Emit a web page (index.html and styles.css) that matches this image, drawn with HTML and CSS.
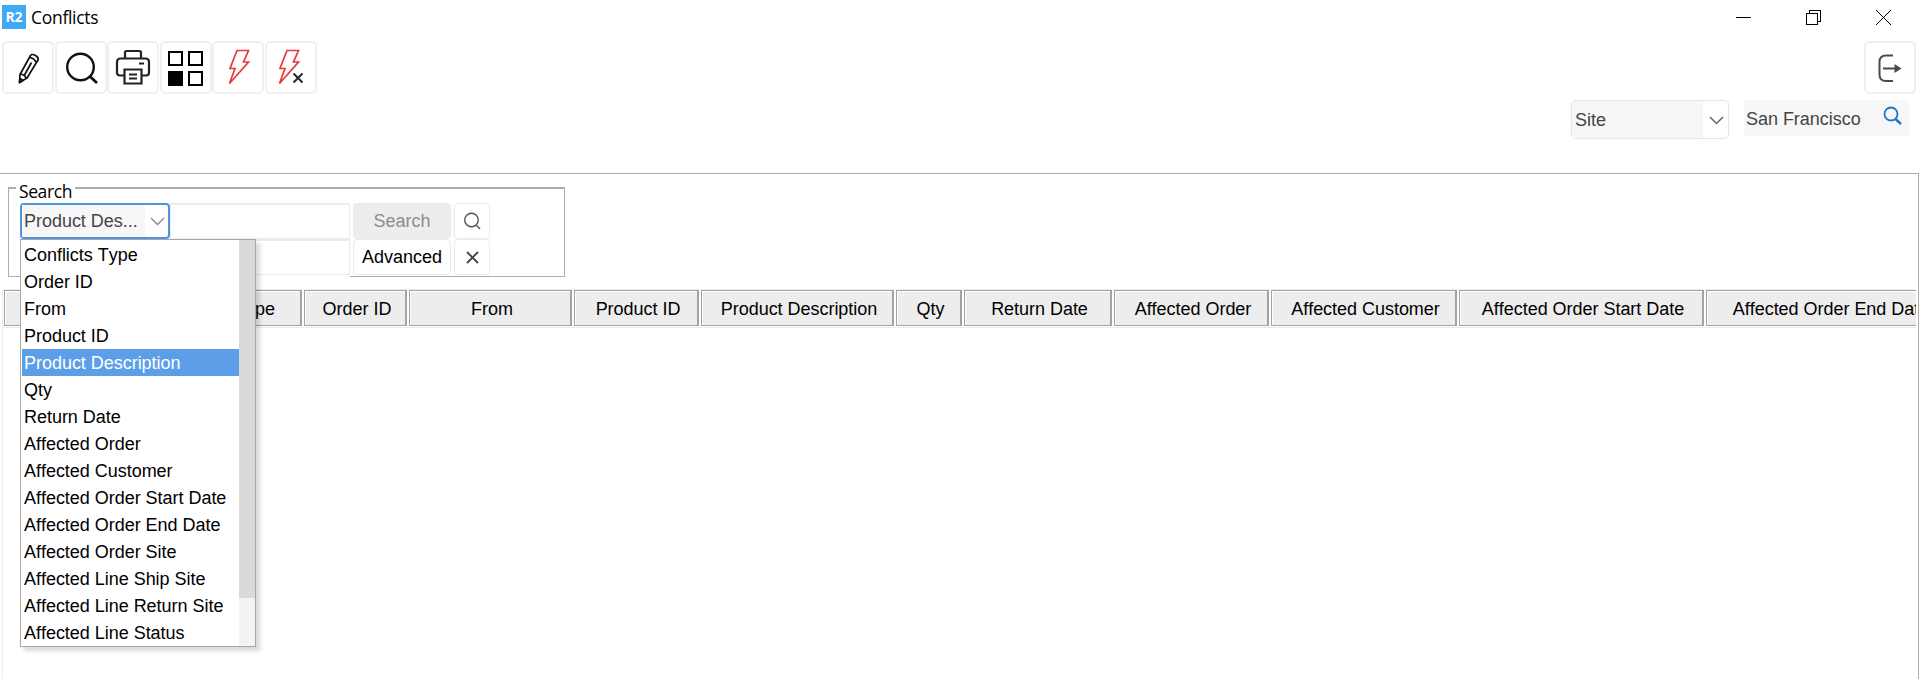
FILE: index.html
```html
<!DOCTYPE html>
<html lang="en">
<head>
    <meta charset="UTF-8">
    <meta name="viewport" content="width=device-width, initial-scale=1.0">
    <title>Conflicts</title>
    <link rel="stylesheet" href="styles.css">
</head>
<body>
    <header class="titlebar">
        <span class="logo">R2</span>
        <span class="title">Conflicts</span>
        <div class="window-controls">
            <svg width="15" height="15" shape-rendering="crispEdges"><path d="M0 7.5h15" stroke="#000"/></svg>
            <svg width="15" height="15" fill="none" stroke="#000" shape-rendering="crispEdges"><path d="M.5 3.5h11v11h-11zM3.5 3.5v-3h11v11h-3"/></svg>
            <svg width="15" height="15" stroke="#000"><path d="M0 0l15 15M15 0L0 15"/></svg>
        </div>
    </header>

    <div class="toolbar">
        <button class="tool">
            <svg width="52" height="52" viewBox="0 0 52 52" fill="none" stroke="#111" stroke-width="1.7" stroke-linejoin="round"><path d="M17.5 40.500l.5-8L28.500 13.500q1.500-2 5 0t2.500 4.500L25 36z"/><path d="M27.500 15.500q4.500.5 6.500 4.500M18.500 32q4 .5 6 4.500M29.500 20.500l-7 12.500M17.500 40.500l.5-4 3 2z"/></svg>
        </button>
        <button class="tool">
            <svg width="52" height="52" viewBox="0 0 52 52" fill="none" stroke="#111" stroke-width="2.400"><circle cx="25.500" cy="25" r="13.300"/><path d="M35 34.500l7 6.500" stroke-width="2.800"/></svg>
        </button>
        <button class="tool">
            <svg width="52" height="52" viewBox="0 0 52 52" fill="none" stroke="#222" stroke-width="2.200"><path d="M18 16V10.500q0-1.500 1.500-1.500h13q1.500 0 1.500 1.500V16"/><path d="M17 33.500h-4q-3 0-3-3V20q0-3.500 3.500-3.500h25q3.500 0 3.500 3.500v10.500q0 3-3 3h-4"/><path d="M17.500 27.500h17v14h-17zM22 32.500h8M22 36.500h8M32 21.500h5"/></svg>
        </button>
        <button class="tool">
            <svg width="52" height="52" viewBox="0 0 52 52" fill="none" stroke="#000" stroke-width="2" shape-rendering="crispEdges"><path d="M9 10h13v13H9zM29 10h13v13H29zM29 30h13v13H29z"/><path d="M9 30h13v13H9z" fill="#000"/></svg>
        </button>
        <button class="tool">
            <svg width="52" height="52" viewBox="0 0 52 52" fill="none" stroke="#e8383a" stroke-width="1.700"><path d="M25 8.500h11.500L31.500 20h5L17.500 41.500 23 26.500h-5z"/></svg>
        </button>
        <button class="tool">
            <svg width="52" height="52" viewBox="0 0 52 52" fill="none" stroke="#e8383a" stroke-width="1.700"><path d="M22 8.500h11.500L28.500 20h5L14.500 41.500 20 26.500h-5z"/><path d="M28.500 31.500l9 9M37.500 31.500l-9 9" stroke="#222" stroke-width="1.900"/></svg>
        </button>
        <button class="tool tool-exit">
            <svg width="52" height="52" viewBox="0 0 52 52" fill="none" stroke="#4a4a4a" stroke-width="2"><path d="M29 13.500h-7q-6.500 0-6.500 6.500v12.500q0 6.500 6.500 6.500h7M19 26.500h14"/><path d="M30.500 22l7 4.500-7 4.500z" fill="#4a4a4a" stroke="none"/></svg>
        </button>
    </div>

    <div class="site-bar">
        <div class="site-select">
            <span class="site-value">Site</span>
            <span class="site-arrow"><svg width="15" height="9" fill="none" stroke="#666" stroke-width="1.500"><path d="M1 1l6.500 6.500L14 1"/></svg></span>
        </div>
        <div class="site-name">
            <span>San Francisco</span>
            <svg width="20" height="20" fill="none" stroke="#1f74d0" stroke-width="1.800"><circle cx="8" cy="8" r="6.500"/><path d="M12.500 13l5.500 5" stroke-width="2.400"/></svg>
        </div>
    </div>

    <main class="content">
        <fieldset class="search-box">
            <legend>Search</legend>
            <div class="search-row">
                <div class="field-select">
                    <span class="field-value">Product Des...</span>
                    <svg width="15" height="9" fill="none" stroke="#888" stroke-width="1.400"><path d="M1 1l6.500 6.500L14 1"/></svg>
                    <div class="dropdown">
                        <ul class="options">
                            <li>Conflicts Type</li>
                            <li>Order ID</li>
                            <li>From</li>
                            <li>Product ID</li>
                            <li class="selected">Product Description</li>
                            <li>Qty</li>
                            <li>Return Date</li>
                            <li>Affected Order</li>
                            <li>Affected Customer</li>
                            <li>Affected Order Start Date</li>
                            <li>Affected Order End Date</li>
                            <li>Affected Order Site</li>
                            <li>Affected Line Ship Site</li>
                            <li>Affected Line Return Site</li>
                            <li>Affected Line Status</li>
                        </ul>
                        <div class="scrollbar"><div class="thumb"></div></div>
                    </div>
                </div>
                <div class="field"></div>
                <button class="btn btn-disabled">Search</button>
                <button class="btn btn-icon"><svg width="18" height="18" fill="none" stroke="#555" stroke-width="1.400"><circle cx="8.500" cy="8" r="6.800"/><path d="M13 13l4 4"/></svg></button>
            </div>
            <div class="search-row">
                <div class="field field-wide"></div>
                <button class="btn">Advanced</button>
                <button class="btn btn-icon"><svg width="13" height="13" stroke="#444" stroke-width="1.800"><path d="M1 1l11 11M12 1L1 12"/></svg></button>
            </div>
        </fieldset>

        <div class="grid">
            <div class="grid-header">
                <div class="col col-type">Conflicts Type</div>
                <div class="col">Order ID</div>
                <div class="col">From</div>
                <div class="col">Product ID</div>
                <div class="col">Product Description</div>
                <div class="col">Qty</div>
                <div class="col">Return Date</div>
                <div class="col">Affected Order</div>
                <div class="col">Affected Customer</div>
                <div class="col">Affected Order Start Date</div>
                <div class="col">Affected Order End Date</div>
            </div>
        </div>
    </main>
</body>
</html>
```
FILE: styles.css
```css
* {
    box-sizing: border-box;
}
body {
    margin: 0;
    height: 679px;
    overflow: hidden;
    display: flex;
    flex-direction: column;
    background: #fff;
    color: #000;
    font-family: "Liberation Sans", Arial, sans-serif;
    font-size: 18px;
    font-kerning: none;
    letter-spacing: -0.03px;
}
svg {
    display: block;
    flex: none;
}
button {
    font: inherit;
    font-kerning: none;
    color: inherit;
    padding: 0;
}
.titlebar {
    flex: none;
    display: flex;
    align-items: center;
    height: 41px;
    padding: 0 29px 7px 2px;
    font-family: "Open Sans", sans-serif;
}
.logo {
    width: 24px;
    height: 24px;
    background: #3fa9f5;
    color: #fff;
    font-size: 14px;
    font-weight: 700;
    line-height: 24px;
    text-align: center;
}
.title {
    margin-left: 5px;
    font-size: 17.5px;
    letter-spacing: -0.3px;
}
.window-controls {
    display: flex;
    margin-left: auto;
    gap: 55px;
}
.toolbar {
    flex: none;
    display: flex;
    height: 53px;
    padding: 0 4px 0 2px;
    gap: 0.6px;
}
.tool {
    width: 52px;
    height: 53px;
    border: 2px solid #f0f0f1;
    border-radius: 5px;
    background: #fff;
    display: flex;
    align-items: center;
    justify-content: center;
}
.tool-exit {
    margin-left: auto;
}
.site-bar {
    flex: none;
    display: flex;
    justify-content: flex-end;
    align-items: flex-start;
    height: 79px;
    padding: 6px 11px 0 0;
    gap: 15px;
    color: #444;
}
.site-select {
    display: flex;
    width: 158px;
    height: 39px;
    border: 1px solid #e6e6e6;
    border-radius: 4px;
    line-height: 38px;
}
.site-value {
    flex: 1;
    padding-left: 3px;
    background: #f7f7f7;
}
.site-arrow {
    width: 25px;
    padding: 15px 0 0 6px;
}
.site-name {
    display: flex;
    justify-content: space-between;
    width: 165px;
    height: 36px;
    padding: 6px 6px 0 2px;
    background: #f7f7f7;
    line-height: 26px;
}
.content {
    flex: none;
    width: 1919px;
    height: 506px;
    overflow: hidden;
    border-top: 1px solid #adadad;
    border-right: 1px solid #adadad;
    padding: 6px 2px 0 2px;
}
.search-box {
    width: 557px;
    height: 97px;
    margin: 0 0 12px 6px;
    padding: 7px 0 0 11px;
    border: 1px solid #adadad;
    border-top-width: 2px;
}
.search-box legend {
    height: 16px;
    margin-left: -4px;
    padding: 0 3px;
    font-family: "Open Sans", sans-serif;
    font-size: 17.5px;
    letter-spacing: -0.4px;
    line-height: 22px;
}
.search-row {
    display: flex;
    gap: 3px;
    height: 36px;
}
.field-select {
    position: relative;
    display: flex;
    align-items: center;
    justify-content: space-between;
    width: 150px;
    height: 36px;
    padding-right: 3px;
    border: 2px solid #5294dc;
    border-radius: 4px;
    color: #444;
}
.field-value {
    width: 123px;
    padding-left: 2px;
    background: #f7f7f7;
    line-height: 32px;
}
.dropdown {
    position: absolute;
    z-index: 1;
    top: 34px;
    left: -2px;
    display: flex;
    width: 236px;
    height: 408px;
    border: 1px solid #a8a8a8;
    background: #fff;
    box-shadow: 4px 4px 4px rgba(0, 0, 0, 0.15);
    color: #000;
}
.options {
    flex: 1;
    margin: 0;
    padding: 1px 0 0 1px;
    list-style: none;
}
.options li {
    height: 27px;
    padding-left: 2px;
    line-height: 28px;
    white-space: nowrap;
}
.options .selected {
    background: #5c9fe8;
    color: #fff;
}
.scrollbar {
    width: 16px;
    background: #f3f3f3;
}
.thumb {
    height: 358px;
    background: #dadada;
}
.field {
    width: 180px;
    height: 36px;
    margin-left: -3px;
    border: 1px solid #ebebeb;
    border-top-width: 2px;
}
.field-wide {
    width: 330px;
    margin-left: 0;
    /* hides the fieldset line below the field */
    box-shadow: 0 3px #fff;
}
.btn {
    width: 98px;
    height: 36px;
    border: 1px solid #ebebeb;
    border-radius: 4px;
    background: #fff;
}
.btn-disabled {
    background: #ededef;
    color: #8c8c8c;
}
.btn-icon {
    display: flex;
    align-items: center;
    justify-content: center;
    width: 36px;
}
.grid {
    height: 400px;
    border-top: 1px solid #ebebeb;
    border-left: 1px solid #ebebeb;
}
.grid-header {
    display: grid;
    grid-template-columns: 298px 103px 163px 125px 193px 66px 148px 155px 186px 245px 247px;
    gap: 2px;
    height: 38px;
    padding: 0 0 2px 1px;
    overflow: hidden;
    border-bottom: 1px solid #ebebeb;
}
.col {
    height: 36px;
    padding-left: 4px;
    border: 1px solid #a3a3a3;
    border-right-width: 2px;
    background: #ededed;
    box-shadow: inset 1px 1px #fff;
    line-height: 36px;
    text-align: center;
    white-space: nowrap;
}
.col-type {
    padding-right: 25px;
    text-align: right;
}
```
